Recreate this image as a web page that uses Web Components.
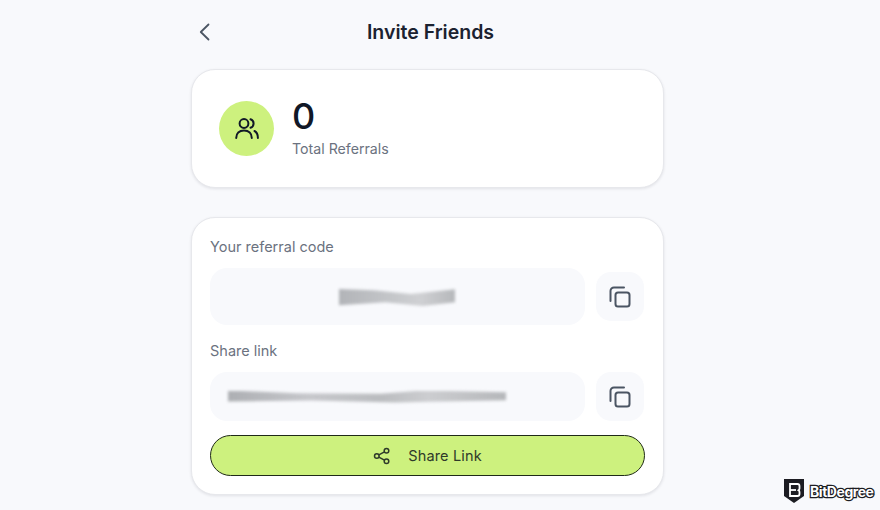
<!DOCTYPE html>
<html lang="en">
  <head>
    <meta charset="UTF-8" />
    <title>Invite Friends</title>
    <style>
      body {
        margin: 0;
        height: 510px;
        overflow: hidden;
        background: #f8f9fc;
        font-family: "Inter", "Liberation Sans", sans-serif;
        color: #111827;
      }
    </style>
  </head>
  <body>
    <invite-page>
      <page-header>Invite Friends</page-header>
      <stat-card count="0">Total Referrals</stat-card>
      <share-card>
        <code-field label="Your referral code" blur="code" box="57" gap="16"></code-field>
        <code-field label="Share link" blur="link" box="49" gap="14"></code-field>
        <share-button>Share Link</share-button>
      </share-card>
    </invite-page>
    <bit-degree></bit-degree>

    <script>
      const define = (name, html) => {
        customElements.define(name, class extends HTMLElement {
          constructor() {
            super();
            this.attachShadow({ mode: "open" });
            this.shadowRoot.innerHTML = typeof html === "function" ? html(this) : html;
          }
        });
      };

      define("invite-page", `
        <style>
          :host { display: flex; flex-direction: column; width: 473px; margin-left: 191px; gap: 29px; }
        </style>
        <slot></slot>`);

      define("page-header", `
        <style>
          :host { display: block; }
          .bar { height: 40px; margin-top: 12px; margin-bottom: -12px; padding-left: 6px; display: grid; grid-template-columns: 20px 1fr 20px; align-items: center; }
          svg { display: block; }
          h1 { margin: 0; text-align: center; font-size: 19.500px; line-height: 40px; font-weight: 600; color: #1b2230; }
        </style>
        <div class="bar">
          <svg width="16" height="20" viewBox="0 0 16 20" fill="none" stroke="#4b5563" stroke-width="1.800" stroke-linecap="round" stroke-linejoin="round"><path d="M11.500 2.500 3.800 10 11.500 17.500"/></svg>
          <h1><slot></slot></h1>
          <span></span>
        </div>`);

      define("stat-card", el => `
        <style>
          :host { display: flex; align-items: center; gap: 18px; height: 119px; box-sizing: border-box; padding: 0 27px; background: #fff; border: 1px solid #e7e8ec; border-radius: 24px; box-shadow: 0 1px 3px rgba(17,24,39,.1); }
          .dot { width: 55px; height: 55px; border-radius: 50%; background: #cdf17e; display: flex; align-items: center; justify-content: center; }
          .count { font-size: 36px; line-height: 40px; font-weight: 500; color: #111827; margin-top: -2px; }
          .label { font-size: 14.200px; line-height: 20px; color: #6b7280; margin-top: 3px; }
        </style>
        <div class="dot">
          <svg width="28" height="28" viewBox="0 0 28 28" fill="none" stroke="#111827" stroke-width="2" stroke-linecap="round"><circle cx="11" cy="8.500" r="4.400"/><path d="M3.200 23c0-4.600 3-7.500 7.800-7.500s7.800 2.900 7.800 7.500"/><path d="M17.500 4.300a4.400 4.400 0 0 1 0 8.400"/><path d="M21.500 16c2.200 1.200 3.400 3.600 3.400 7"/></svg>
        </div>
        <div>
          <div class="count">${el.getAttribute("count")}</div>
          <div class="label"><slot></slot></div>
        </div>`);

      define("share-card", `
        <style>
          :host { display: flex; flex-direction: column; box-sizing: border-box; height: 278px; padding: 19px 18px 0; background: #fff; border: 1px solid #e7e8ec; border-radius: 24px; box-shadow: 0 1px 3px rgba(17,24,39,.1); }
        </style>
        <slot></slot>`);

      // the blurred-out values: a rough shape, blurred afterwards
      const smears = {
        code: `width:116px; height:17px; margin:2px 0 0 129px; background:linear-gradient(90deg,#b2b4b8,#c4c6c9 45%,#cfd0d3 70%,#b6b8bb); clip-path:polygon(0 0,30% 8%,62% 30%,100% 2%,100% 78%,72% 100%,40% 78%,0 96%);`,
        link: `width:278px; height:12px; margin-left:18px; background:linear-gradient(90deg,#adafb3,#c6c7cb 30%,#babcbf 55%,#cccdd0 72%,#b5b7ba); clip-path:polygon(0 0,25% 22%,55% 28%,70% 0,100% 14%,100% 82%,60% 100%,30% 84%,0 92%);`
      };

      define("code-field", el => `
        <style>
          :host { display: block; margin-bottom: ${el.getAttribute("gap")}px; color: #6b7280; }
          .label { font-size: 14.500px; line-height: 20px; margin-bottom: 11px; }
          .row { display: flex; align-items: center; gap: 11px; margin-right: 1px; }
          .box { flex: 1; height: ${el.getAttribute("box")}px; border-radius: 17px; background: #f8f9fc; display: flex; align-items: center; }
          .blur { filter: blur(1.600px); }
          button { width: 48px; height: 49px; padding: 0; border: 0; border-radius: 15px; background: #f8f9fc; display: flex; align-items: center; justify-content: center; }
        </style>
        <div class="label">${el.getAttribute("label")}</div>
        <div class="row">
          <div class="box"><div class="blur"><div style="${smears[el.getAttribute("blur")]}"></div></div></div>
          <button>
            <svg width="24" height="24" viewBox="0 0 24 24" fill="none" stroke="#4b5563" stroke-width="2" stroke-linecap="round" stroke-linejoin="round"><rect x="7.500" y="7.500" width="14" height="14" rx="2.500"/><path d="M16 2.500H6A3.500 3.500 0 0 0 2.500 6v10"/></svg>
          </button>
        </div>`);

      define("share-button", `
        <style>
          :host { display: flex; align-items: center; justify-content: center; gap: 17px; height: 41px; box-sizing: border-box; background: #cdf17e; border: 1px solid #1f2a18; border-radius: 21px; font-size: 14.500px; font-weight: 400; letter-spacing: 0.150px; color: #2f3a2a; }
          svg { display: block; }
        </style>
        <svg width="18" height="18" viewBox="0 0 18 18" fill="none" stroke="#2f3a2a" stroke-width="1.500"><circle cx="3.800" cy="9" r="2.300"/><circle cx="13.500" cy="3.800" r="2.300"/><circle cx="13.500" cy="14.200" r="2.300"/><path d="m5.800 7.900 5.700-3M5.800 10.100l5.700 3"/></svg>
        <span><slot></slot></span>`);

      define("bit-degree", `
        <style>
          :host { position: absolute; left: 783px; top: 478px; display: flex; align-items: center; gap: 5px; }
          span { font-family: "Inter", "Liberation Sans", sans-serif; font-size: 14px; font-weight: 700; letter-spacing: -0.450px; color: #fff; -webkit-text-stroke: 2.400px #1c1c22; paint-order: stroke fill; }
        </style>
        <svg width="22" height="26" viewBox="0 0 22 26"><path d="M1 1h20v17l-10 7-10-7z" fill="#1c1c22"/><path d="M7 6h7.500a2 2 0 0 1 2 2v2.500a2 2 0 0 1-1 1.700 2 2 0 0 1 1 1.700V16a2 2 0 0 1-2 2H7z" fill="none" stroke="#fff" stroke-width="1.800"/><path d="M7 12h6" stroke="#fff" stroke-width="1.800"/></svg>
        <span>BitDegree</span>`);
    </script>
  </body>
</html>
